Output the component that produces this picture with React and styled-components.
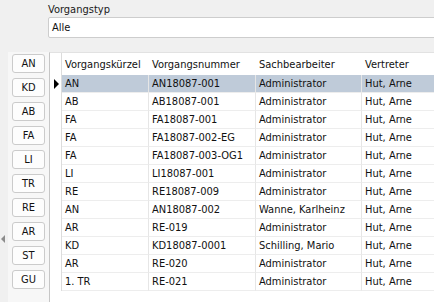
import React from 'react';
import styled, { createGlobalStyle } from 'styled-components';

const GlobalStyle = createGlobalStyle`
  html, body {
    margin: 0;
    padding: 0;
    background: #f0f0f0;
    overflow: hidden;
  }
  body {
    font-family: "DejaVu Sans", "Liberation Sans", sans-serif;
    font-stretch: condensed;
    font-size: 11px;
    color: #111;
  }
`;

const Page = styled.div`
  width: 434px;
  height: 302px;
  overflow: hidden;
  display: flex;
  flex-direction: column;
`;

const FilterBar = styled.div`
  padding: 4px 0 0 48px;
  height: 52px;
  flex: none;
  box-sizing: border-box;
`;

const FieldLabel = styled.div`
  height: 13px;
  line-height: 12px;
  color: #1a1a1a;
`;

const Select = styled.div`
  box-sizing: border-box;
  height: 21px;
  width: 420px;
  background: #fff;
  border: 1px solid #cdcdcd;
  border-radius: 2px;
  padding: 0 3px;
  line-height: 19px;
`;

const Main = styled.div`
  flex: 1;
  display: flex;
  min-height: 0;
`;

const Splitter = styled.div`
  width: 8px;
  padding-top: 183px;
  box-sizing: border-box;
`;

const CollapseArrow = styled.div`
  width: 0;
  height: 0;
  margin-left: 1px;
  border-top: 4px solid transparent;
  border-bottom: 4px solid transparent;
  border-right: 4px solid #8c8c8c;
`;

const ButtonPanel = styled.div`
  width: 41px;
  background: #f7f7f7;
  display: flex;
  flex-direction: column;
  gap: 5px;
  padding: 2px 0 0 4px;
  box-sizing: border-box;
`;

const TypeButton = styled.button`
  box-sizing: border-box;
  width: 33px;
  height: 19px;
  padding: 0;
  background: #fdfdfd;
  border: 1px solid #cbcbcb;
  border-radius: 3px;
  font: inherit;
  color: #111;
  text-align: center;
`;

const Grid = styled.div`
  flex: 1;
  background: #fff;
  border-left: 1px solid #c6c6c6;
  border-top: 1px solid #e2e2e2;
  display: grid;
  grid-template-columns: 12px 87px 107px 106px 120px;
  grid-auto-rows: 18px;
  grid-template-rows: 22px;
  align-content: start;
  overflow: hidden;
`;

const Indicator = styled.div`
  border-right: 1px solid #dcdcdc;
  display: flex;
  align-items: center;
  padding-left: 4px;
`;

const Pointer = styled.div`
  width: 0;
  height: 0;
  border-top: 5px solid transparent;
  border-bottom: 5px solid transparent;
  border-left: 5px solid #000;
`;

const HeadCell = styled.div`
  display: flex;
  align-items: center;
  padding-left: 3px;
  white-space: nowrap;
`;

const Cell = styled.div`
  display: flex;
  align-items: center;
  padding-left: 3px;
  white-space: nowrap;
  overflow: hidden;
  border-right: 1px solid #e6e6e6;
  border-bottom: 1px solid #ededed;
  background: ${(p) => (p.$selected ? '#bfcbd9' : '#fff')};
`;

const buttons = ['AN', 'KD', 'AB', 'FA', 'LI', 'TR', 'RE', 'AR', 'ST', 'GU'];

const rows = [
  ['AN', 'AN18087-001', 'Administrator', 'Hut, Arne'],
  ['AB', 'AB18087-001', 'Administrator', 'Hut, Arne'],
  ['FA', 'FA18087-001', 'Administrator', 'Hut, Arne'],
  ['FA', 'FA18087-002-EG', 'Administrator', 'Hut, Arne'],
  ['FA', 'FA18087-003-OG1', 'Administrator', 'Hut, Arne'],
  ['LI', 'LI18087-001', 'Administrator', 'Hut, Arne'],
  ['RE', 'RE18087-009', 'Administrator', 'Hut, Arne'],
  ['AN', 'AN18087-002', 'Wanne, Karlheinz', 'Hut, Arne'],
  ['AR', 'RE-019', 'Administrator', 'Hut, Arne'],
  ['KD', 'KD18087-0001', 'Schilling, Mario', 'Hut, Arne'],
  ['AR', 'RE-020', 'Administrator', 'Hut, Arne'],
  ['1. TR', 'RE-021', 'Administrator', 'Hut, Arne'],
];

const headers = ['Vorgangskürzel', 'Vorgangsnummer', 'Sachbearbeiter', 'Vertreter'];

export default function App() {
  return (
    <Page>
      <GlobalStyle />
      <FilterBar>
        <FieldLabel>Vorgangstyp</FieldLabel>
        <Select>Alle</Select>
      </FilterBar>
      <Main>
        <Splitter>
          <CollapseArrow />
        </Splitter>
        <ButtonPanel>
          {buttons.map((b) => (
            <TypeButton key={b}>{b}</TypeButton>
          ))}
        </ButtonPanel>
        <Grid>
          <Indicator />
          {headers.map((h) => (
            <HeadCell key={h}>{h}</HeadCell>
          ))}
          {rows.map((r, i) => (
            <React.Fragment key={i}>
              <Indicator>{i === 0 && <Pointer />}</Indicator>
              {r.map((c, j) => (
                <Cell key={j} $selected={i === 0}>
                  {c}
                </Cell>
              ))}
            </React.Fragment>
          ))}
        </Grid>
      </Main>
    </Page>
  );
}
